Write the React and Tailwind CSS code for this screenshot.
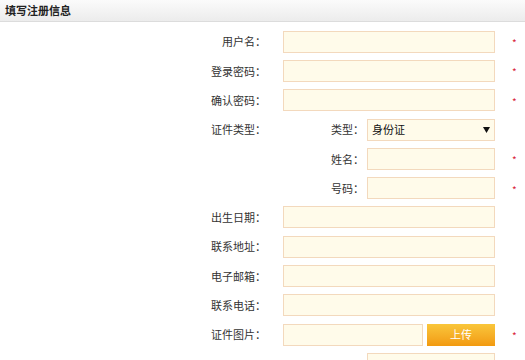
const font = { fontFamily: '"Noto Sans CJK SC", "Noto Sans", sans-serif' };

function Field({ className = 'w-[212px]' }) {
  return <div className={`${className} h-[22px] border border-[#f3d9bd] bg-[#fffbea]`} />;
}

function Star({ show = false }) {
  return <span className="w-[24px] pl-[17px] pt-[2px] text-[10px] text-[#d9233a]">{show ? '*' : ''}</span>;
}

function Row({ label, children, star }) {
  return (
    <div className="flex h-[29.3px] items-center">
      <div className="w-[266px] text-right">{label}</div>
      <div className="ml-[17px] flex items-center">{children}</div>
      <Star show={star} />
    </div>
  );
}

function SubRow({ label, children, star, left = '' }) {
  return (
    <div className="flex h-[29.3px] items-center">
      <div className="w-[266px] text-right">{left}</div>
      <div className="ml-[17px] flex w-[212px] items-center">
        <div className="w-[81px] text-right">{label}</div>
        <div className="ml-[3px]">{children}</div>
      </div>
      <Star show={star} />
    </div>
  );
}

export default function App() {
  return (
    <div className="h-[360px] w-[525px] overflow-hidden bg-white text-[11px] text-[#333]" style={font}>
      <div className="flex h-[22px] items-center border-b border-[#dcdcdc] bg-gradient-to-b from-[#fbfbfb] to-[#ececec] pl-[5px] font-bold text-[#222]">
        填写注册信息
      </div>
      <div className="pt-[5px]">
        <Row label="用户名：" star><Field /></Row>
        <Row label="登录密码：" star><Field /></Row>
        <Row label="确认密码：" star><Field /></Row>
        <SubRow left="证件类型：" label="类型：">
          <div className="flex h-[22px] w-[128px] items-center justify-between border border-[#f3d9bd] bg-[#fffbea] pl-[4px] pr-[4px] text-[#111]">
            <span>身份证</span>
            <svg width="7" height="6" viewBox="0 0 7 6"><path d="M0 0h7L3.5 6z" fill="#111" /></svg>
          </div>
        </SubRow>
        <SubRow label="姓名：" star><Field className="w-[128px]" /></SubRow>
        <SubRow label="号码：" star><Field className="w-[128px]" /></SubRow>
        <Row label="出生日期："><Field /></Row>
        <Row label="联系地址："><Field /></Row>
        <Row label="电子邮箱："><Field /></Row>
        <Row label="联系电话："><Field /></Row>
        <Row label="证件图片：" star>
          <Field className="w-[140px]" />
          <button className="ml-[4px] h-[22px] w-[68px] bg-gradient-to-b from-[#f9c63a] to-[#f29a0e] text-[11px] text-white">上传</button>
        </Row>
        <SubRow label=""><Field className="w-[128px]" /></SubRow>
      </div>
    </div>
  );
}
